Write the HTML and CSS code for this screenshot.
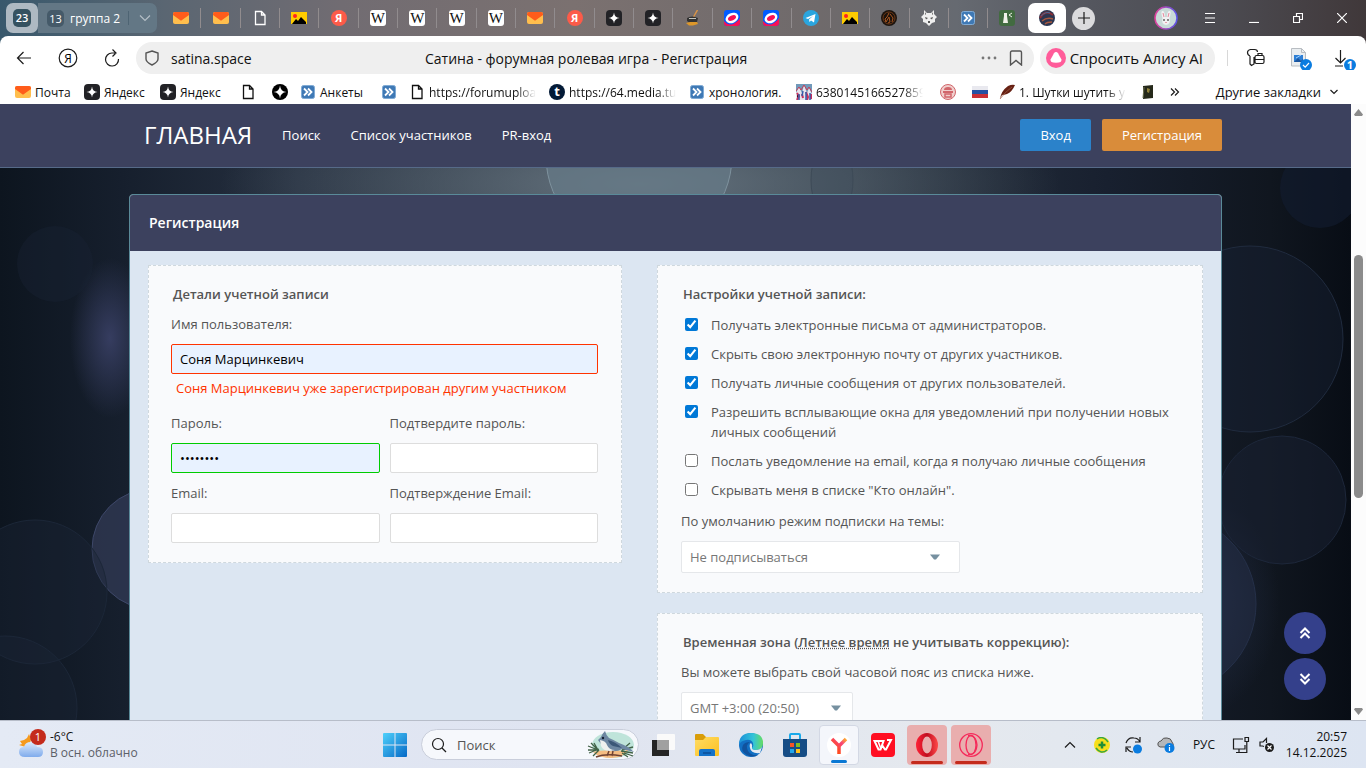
FILE: index.html
```html
<!DOCTYPE html>
<html lang="ru">
<head>
<meta charset="utf-8">
<title>Сатина - форумная ролевая игра - Регистрация</title>
<link rel="stylesheet" href="styles.css">
</head>
<body>
<svg class="sprite" aria-hidden="true">
  <defs>
    <linearGradient id="g-win" x1="0" y1="0" x2="1" y2="1"><stop offset="0" stop-color="#4fd0fb"/><stop offset="1" stop-color="#0669c6"/></linearGradient>
    <linearGradient id="g-edge" x1="0" y1="0" x2="1" y2="0"><stop offset="0" stop-color="#1b8fd8"/><stop offset=".6" stop-color="#33c4d8"/><stop offset="1" stop-color="#66dd62"/></linearGradient>
    <linearGradient id="g-y" x1="0" y1="1" x2="1" y2="0"><stop offset=".3" stop-color="#ff4b1f"/><stop offset=".7" stop-color="#f8437a"/><stop offset="1" stop-color="#ffae2a"/></linearGradient>
    <linearGradient id="g-op" x1="0" y1="0" x2="1" y2="0"><stop offset="0" stop-color="#ff2338"/><stop offset=".5" stop-color="#c00c1e"/><stop offset="1" stop-color="#ff4a4a"/></linearGradient>
    <linearGradient id="g-ring" x1="0" y1="0" x2="1" y2="0"><stop offset="0" stop-color="#e0409b"/><stop offset="1" stop-color="#5a55e8"/></linearGradient>
    <linearGradient id="g-cloud" x1="0" y1="0" x2="0" y2="1"><stop offset="0" stop-color="#dcebfc"/><stop offset="1" stop-color="#7fabec"/></linearGradient>
    <linearGradient id="g-fold" x1="0" y1="0" x2="1" y2="1"><stop offset="0" stop-color="#ffdc63"/><stop offset="1" stop-color="#fcc021"/></linearGradient>
  </defs>
  <symbol id="mail" viewBox="0 0 16 16"><rect y="2" width="16" height="12" rx="2" fill="#ffbe4d"/><path d="M0 4q0-2 2-2h12q2 0 2 2v1L9 10q-1 1-2 0L0 5z" fill="#ff5c1b"/></symbol>
  <symbol id="file" viewBox="0 0 16 16"><path d="M3.500 1.500h6l3.500 3.500v9.500h-9.500zM9.500 1.500v3.500h3.500" fill="none" stroke="currentColor" stroke-width="1.300"/></symbol>
  <symbol id="photo" viewBox="0 0 16 16"><rect y="2" width="16" height="12" fill="#ffcc00"/><path d="M1 14l4-5 2 2 3-4 5 5v2z" fill="#000"/><circle cx="4" cy="6" r="2" fill="#f22"/></symbol>
  <symbol id="spark" viewBox="0 0 16 16"><rect width="16" height="16" rx="4" fill="#222226"/><path d="M8 2.500q.5 5 5.500 5.500-5 .5-5.500 5.500-.5-5-5.500-5.500 5-.5 5.500-5.500" fill="#fff"/></symbol>
  <symbol id="sparkr" viewBox="0 0 16 16"><circle cx="8" cy="8" r="8" fill="#000"/><path d="M8 1.500q.5 6 6.500 6.500-6 .5-6.500 6.500-.5-6-6.500-6.500 6-.5 6.500-6.500" fill="#fff"/></symbol>
  <symbol id="lamp" viewBox="0 0 16 16"><path d="M12.500 0L8.500 7" stroke="#d99446" stroke-width="1.500"/><path d="M2 8q5-3 11 0l-1 4-2 1H5l-3-2z" fill="#333"/><path d="M4 8h7v1H4z" fill="#c3c3bd"/><path d="M1 13l4-1h7l1 2-5 1.500H4z" fill="#dd972a"/></symbol>
  <symbol id="swirl" viewBox="0 0 16 16"><rect width="16" height="16" rx="3" fill="#005bff"/><path d="M0 11Q5 17 11 13t5-7v7q0 3-3 3H3q-3 0-3-3z" fill="#f81155"/><ellipse cx="8" cy="8" rx="5.500" ry="3.700" transform="rotate(-25 8 8)" fill="#f81155" stroke="#fff" stroke-width="2.500"/></symbol>
  <symbol id="tg" viewBox="0 0 16 16"><circle cx="8" cy="8" r="8" fill="#2aa5de"/><path d="M2.500 8L12.500 4 11 12.500 8 10.500 6.500 12 6 9.500l4-3.500-5 3z" fill="#fff"/></symbol>
  <symbol id="fire" viewBox="0 0 16 16"><circle cx="8" cy="8" r="8" fill="#1b130d"/><circle cx="8" cy="8" r="6" fill="none" stroke="#6b3716"/><path d="M8 3l-2 4-2 2 1 3 3-5 1 5-2 1m2-9l3 4-1 4" fill="none" stroke="#a85520"/></symbol>
  <symbol id="wolf" viewBox="0 0 16 16"><path d="M3 0l3 3h4l3-3v4l3 3-2 2v3l-3 1-3 3-3-3-3-1V9L0 7l3-3z" fill="#eee"/><path d="M4 7l3 1-2 1.500zm8 0L9 8l2 1.500zM7 11h2v2H7zM4 2l1 2-1 1zm8 0l-1 2 1 1z" fill="#555"/></symbol>
  <symbol id="ff" viewBox="0 0 16 16"><rect x="1.500" y="1.500" width="13" height="13" rx="2" fill="#3f79b5" stroke="#80abd5"/><path d="M4 4.500L7.500 8 4 11.500m4-7L11.500 8 8 11.500" fill="none" stroke="#fff" stroke-width="1.800"/></symbol>
  <symbol id="tower" viewBox="0 0 16 16"><rect width="16" height="16" rx="3" fill="#426b40"/><path d="M5 3h3v3l1 7H4l1-7z" fill="#f1f1e9"/><path d="M13 3l-3 2 3 2" fill="none" stroke="#f1f1e9"/></symbol>
  <symbol id="planet" viewBox="0 0 16 16"><circle cx="8" cy="8" r="8" fill="#2c3550"/><path d="M1 8Q6-1 14 5" stroke="#8c2f36" stroke-width="2" fill="none"/><path d="M3 11q5-4 11-2M6 14q2-2 7-2" stroke="#a8583e" stroke-width="1.500" fill="none"/><path d="M2 6q5-5 9-3" stroke="#466a96" fill="none"/></symbol>
  <symbol id="collage" viewBox="0 0 16 16"><rect width="16" height="16" fill="#7199ba"/><path d="M0 16V9l3-6 3 6 2-8 3 8 2-5 3 6v6z" fill="#e9e4ec"/><path d="M1 9l2 3-2 4m5-6l1 4m3-6l2 5-1 3m4-6v5" stroke="#c62f5f" stroke-width="2"/><path d="M3 10v6m4-9l-1 5m4-4v8m4-7v7" stroke="#365daa" stroke-width="1.500"/><path d="M0 7l3-4 2 3 3-5 3 5 2-3 3 5" fill="none" stroke="#c4405a"/></symbol>
  <symbol id="seal" viewBox="0 0 16 16"><circle cx="8" cy="8" r="7.500" fill="#f0cfcd" stroke="#d1666b"/><path d="M4 6q0-3 4-3t4 3zM3 7h10v2H3z" fill="#d1666b"/><path d="M5 10h6v3H5z" fill="none" stroke="#d1666b" stroke-width="1.500"/></symbol>
  <symbol id="flag" viewBox="0 0 16 16"><rect y="2" width="16" height="12" fill="#e9e9ef"/><rect y="6" width="16" height="4" fill="#2451a4"/><rect y="10" width="16" height="4" fill="#c82f37"/></symbol>
  <symbol id="feather" viewBox="0 0 16 16"><path d="M1 15Q2 7 9 2q4-2 7-1-3 7-8 9-3 1-5 1z" fill="#672114"/><path d="M1 15Q6 8 13 3" stroke="#a46048" fill="none" stroke-width=".7"/></symbol>
  <symbol id="book" viewBox="0 0 16 16"><path d="M3 2l10-1v13l-10 1z" fill="#25291a"/><path d="M7 4l3 1-1 4-2-1z" fill="#8f813b"/><path d="M4 3l-1 11" stroke="#707455"/></symbol>
</svg>

<header class="tabstrip">
  <button class="tabcount" aria-label="Группы вкладок"><span>23</span></button>
  <button class="tabgroup"><span class="groupnum">13</span><span>группа 2</span><i class="groupsep"></i><svg width="12" height="8" viewBox="0 0 12 8"><path d="M1 1.500l5 5 5-5" class="line pale"/></svg></button>
  <nav class="tabs" aria-label="Вкладки">
    <a href="#"><svg><use href="#mail"/></svg></a><a href="#"><svg><use href="#mail"/></svg></a><a href="#"><svg><use href="#file"/></svg></a><a href="#"><svg><use href="#photo"/></svg></a><a href="#"><span class="badge ya">Я</span></a><a href="#"><span class="badge wiki">W</span></a><a href="#"><span class="badge wiki">W</span></a><a href="#"><span class="badge wiki">W</span></a><a href="#"><span class="badge wiki">W</span></a><a href="#"><svg><use href="#mail"/></svg></a><a href="#"><span class="badge ya">Я</span></a><a href="#"><svg><use href="#spark"/></svg></a><a href="#"><svg><use href="#spark"/></svg></a><a href="#"><svg><use href="#lamp"/></svg></a><a href="#"><svg><use href="#swirl"/></svg></a><a href="#"><svg><use href="#swirl"/></svg></a><a href="#"><svg><use href="#tg"/></svg></a><a href="#"><svg><use href="#photo"/></svg></a><a href="#"><svg><use href="#fire"/></svg></a><a href="#"><svg><use href="#wolf"/></svg></a><a href="#"><svg><use href="#ff"/></svg></a><a href="#"><svg><use href="#tower"/></svg></a><a href="#" class="active"><svg><use href="#planet"/></svg></a>
  </nav>
  <div class="wincontrols">
    <button class="newtab" aria-label="Новая вкладка"><svg width="12" height="12" viewBox="0 0 12 12"><path d="M6 0v12M0 6h12" class="line"/></svg></button>
    <span class="spacer"></span>
    <button aria-label="Профиль"><svg width="24" height="24" viewBox="0 0 24 24"><circle cx="12" cy="12" r="11" fill="#c8dad8" stroke="url(#g-ring)" stroke-width="1.500"/><path d="M8.500 12Q6 4 9 5q2 1 2 6h2q0-5 2-6 3-1 .5 7 1.500 6-3.500 7-5-1-3.500-7" fill="#f2f1f3"/><path d="M9 7l1 4m5-4l-1 4" stroke="#e7889b"/><circle cx="10" cy="14" r=".8"/><circle cx="14" cy="14" r=".8"/><path d="M11 16h2l-1 1z" fill="#d3506a"/></svg></button>
    <button aria-label="Меню"><svg width="10" height="10" viewBox="0 0 10 10"><path d="M0 .5h10M0 5h10M0 9.500h10" class="line white"/></svg></button>
    <button aria-label="Свернуть"><svg width="10" height="10" viewBox="0 0 10 10"><path d="M0 9.500h10" class="line white"/></svg></button>
    <button aria-label="Развернуть"><svg width="10" height="10" viewBox="0 0 10 10"><path d="M.5 3.500h6v6h-6zM3.500 3V.5h6v6H7" class="line white"/></svg></button>
    <button aria-label="Закрыть"><svg width="10" height="10" viewBox="0 0 10 10"><path d="M0 0l10 10M10 0L0 10" class="line white"/></svg></button>
  </div>
</header>

<div class="chrome">
  <div class="toolbar">
    <button class="tool" aria-label="Назад"><svg width="16" height="14" viewBox="0 0 16 14"><path d="M15 7H1.500M7.500 1l-6 6 6 6" class="line"/></svg></button>
    <button class="tool" aria-label="Яндекс"><svg width="20" height="20" viewBox="0 0 20 20"><circle cx="10" cy="10" r="8.800" class="line"/><text x="10" y="14.500" text-anchor="middle" font-size="12">Я</text></svg></button>
    <button class="tool" aria-label="Обновить"><svg width="16" height="18" viewBox="0 0 16 18"><path d="M14.500 10A6.500 6.500 0 1 1 8 4h3M8.500.5L12 4 8.500 7.500" class="line" stroke-width="1.500"/></svg></button>
    <div class="address">
      <svg width="14" height="16" viewBox="0 0 14 16"><path d="M7 1l6 2v6q0 3-6 6-6-3-6-6V3z" class="line grey"/></svg>
      <span class="host">satina.space</span>
      <span class="doctitle">Сатина - форумная ролевая игра - Регистрация</span>
      <svg width="16" height="4" viewBox="0 0 16 4" fill="#777"><circle cx="2" cy="2" r="1.400"/><circle cx="8" cy="2" r="1.400"/><circle cx="14" cy="2" r="1.400"/></svg>
      <svg width="14" height="16" viewBox="0 0 14 16"><path d="M1.500 2.500q0-1.500 1.500-1.500h8q1.500 0 1.500 1.500V15L7 10.500 1.500 15z" class="line grey"/></svg>
    </div>
    <button class="alice"><svg width="20" height="20" viewBox="0 0 20 20"><circle cx="10" cy="10" r="10" fill="#ff5c9a"/><path d="M10 4q1.200 0 2 1.300l3.300 5.900q1.200 3.600-5.300 3.600t-5.300-3.600L8 5.300Q8.800 4 10 4z" fill="#fff"/></svg>Спросить Алису AI</button>
    <i class="vsep"></i>
    <button class="ext" aria-label="Пароли"><svg width="20" height="20" viewBox="0 0 20 20"><path d="M4 8Q1.500 7 1.500 4.500T4.500 1.500h4q3 0 3 2.500M4 8v8l1.500 1.500L8 16V9M10.500 7.500h6q1.500 0 1.500 1.500v5q0 1.500-1.500 1.500h-6Q9 15.500 9 14V9q0-1.500 1.500-1.500zM9 11.500h9M12 7V5.500h4V7" class="line" stroke-width="1.400"/></svg></button>
    <button class="ext" aria-label="Переводчик"><svg width="24" height="24" viewBox="0 0 24 24"><path d="M3.500 2.500h10l4 4V20h-14z" fill="#e9edf0" stroke="#b8bdc2"/><path d="M13.500 2.500v4h4" fill="none" stroke="#b8bdc2"/><rect x="6" y="9" width="9" height="7" fill="#2d7ed4"/><path d="M6 16l4-4 3 3 2-2v3z" fill="#1b559e"/><path d="M8 12l5-3" stroke="#9fd0ff"/><circle cx="18" cy="19" r="6" fill="#0a7ce0"/><path d="M15 19l2.200 2.200L21 17" class="line white" stroke-width="1.500"/></svg></button>
    <button class="ext" aria-label="Загрузки"><svg width="24" height="24" viewBox="0 0 24 24"><path d="M8.500 4v13M3.500 12l5 5 5-5M3 20h8" class="line"/><circle cx="18" cy="19" r="6" fill="#0a7ce0"/><text x="18" y="23" font-size="11" font-weight="700" text-anchor="middle" fill="#fff">1</text></svg></button>
  </div>
  <nav class="bookmarks" aria-label="Закладки">
    <a href="#"><svg><use href="#mail"/></svg><span>Почта</span></a>
    <a href="#"><svg><use href="#spark"/></svg><span>Яндекс</span></a>
    <a href="#"><svg><use href="#spark"/></svg><span>Яндекс</span></a>
    <a href="#"><svg><use href="#file"/></svg></a>
    <a href="#"><svg><use href="#sparkr"/></svg></a>
    <a href="#"><svg><use href="#ff"/></svg><span>Анкеты</span></a>
    <a href="#"><svg><use href="#ff"/></svg></a>
    <a href="#"><svg><use href="#file"/></svg><span class="fade">https://forumupload</span></a>
    <a href="#"><span class="badge tumblr">t</span><span class="fade">https://64.media.tumblr</span></a>
    <a href="#"><svg><use href="#ff"/></svg><span>хронология.</span></a>
    <a href="#"><svg><use href="#collage"/></svg><span class="fade">6380145166527859</span></a>
    <a href="#"><svg><use href="#seal"/></svg></a>
    <a href="#"><svg><use href="#flag"/></svg></a>
    <a href="#"><svg><use href="#feather"/></svg><span class="fade">1. Шутки шутить умеют</span></a>
    <a href="#"><svg><use href="#book"/></svg></a>
    <button class="more" aria-label="Ещё закладки"><svg class="small" viewBox="0 0 10 10"><path d="M1 1.500L4.500 5 1 8.500m4-7L8.500 5 5 8.500" class="line"/></svg></button>
    <button class="other">Другие закладки <svg class="small" viewBox="0 0 10 10"><path d="M1.500 3L5 6.500 8.500 3" class="line"/></svg></button>
  </nav>
</div>

<div class="viewport">
  <div class="page">
    <svg class="bokeh" viewBox="0 0 1351 616" preserveAspectRatio="none" aria-hidden="true">
      <circle cx="639" cy="52" r="93" fill="#657987" fill-opacity=".75" stroke="#7e929e"/>
      <ellipse cx="832" cy="76" rx="21" ry="40" fill="#41505d" fill-opacity=".5" stroke="#3d4a57"/>
      <circle cx="152" cy="445" r="60" fill="#39415f" fill-opacity=".6" stroke="#3d4768"/>
      <circle cx="1250" cy="235" r="93" fill="#1a2436" fill-opacity=".4" stroke="#202b3e"/>
      <circle cx="1282" cy="396" r="64" fill="#192233" fill-opacity=".5" stroke="#1d273a"/>
      <circle cx="1166" cy="500" r="90" fill="#253049" fill-opacity=".5" stroke="#253049"/>
      <circle cx="35" cy="488" r="72" fill="#1b2536" fill-opacity=".4" stroke="#1c2738"/>
      <circle cx="5" cy="604" r="72" fill="#1b2536" fill-opacity=".4" stroke="#1c2738"/>
      <circle cx="55" cy="160" r="38" fill="#1a2434" fill-opacity=".4"/>
      <circle cx="1320" cy="84" r="40" fill="#131d31" fill-opacity=".6"/>
    </svg>
    <header class="navbar">
      <a class="brand" href="#">ГЛАВНАЯ</a>
      <nav><a href="#">Поиск</a><a href="#">Список участников</a><a href="#">PR-вход</a></nav>
      <a class="btn blue" href="#">Вход</a>
      <a class="btn orange" href="#">Регистрация</a>
    </header>
    <main class="panel">
      <h1>Регистрация</h1>
      <form class="columns">
        <fieldset>
          <h2>Детали учетной записи</h2>
          <div class="fields">
            <div class="field wide">
              <label for="user">Имя пользователя:</label>
              <input id="user" type="text" class="filled bad" value="Соня Марцинкевич">
              <p class="error">Соня Марцинкевич уже зарегистрирован другим участником</p>
            </div>
            <div class="field"><label for="pass">Пароль:</label><input id="pass" type="password" class="filled good" value="password"></div>
            <div class="field"><label for="pass2">Подтвердите пароль:</label><input id="pass2" type="password"></div>
            <div class="field"><label for="mail1">Email:</label><input id="mail1" type="email"></div>
            <div class="field"><label for="mail2">Подтверждение Email:</label><input id="mail2" type="email"></div>
          </div>
        </fieldset>
        <div class="stack">
          <fieldset>
            <h2>Настройки учетной записи:</h2>
            <div class="checks">
              <label><input type="checkbox" checked><span>Получать электронные письма от администраторов.</span></label>
              <label><input type="checkbox" checked><span>Скрыть свою электронную почту от других участников.</span></label>
              <label><input type="checkbox" checked><span>Получать личные сообщения от других пользователей.</span></label>
              <label><input type="checkbox" checked><span>Разрешить всплывающие окна для уведомлений при получении новых личных сообщений</span></label>
              <label><input type="checkbox"><span>Послать уведомление на email, когда я получаю личные сообщения</span></label>
              <label><input type="checkbox"><span>Скрывать меня в списке "Кто онлайн".</span></label>
            </div>
            <label class="selectlabel" for="sub">По умолчанию режим подписки на темы:</label>
            <div class="select long"><select id="sub"><option>Не подписываться</option></select><svg width="10" height="6" viewBox="0 0 10 6"><path d="M0 .5h10L6 5.500H4z" fill="#7690a0"/></svg></div>
          </fieldset>
          <fieldset>
            <h2>Временная зона (<abbr>Летнее время</abbr> не учитывать коррекцию):</h2>
            <label class="selectlabel" for="tz">Вы можете выбрать свой часовой пояс из списка ниже.</label>
            <div class="select short"><select id="tz"><option>GMT +3:00 (20:50)</option></select><svg width="10" height="6" viewBox="0 0 10 6"><path d="M0 .5h10L6 5.500H4z" fill="#7690a0"/></svg></div>
          </fieldset>
        </div>
      </form>
    </main>
    <div class="jump">
      <button aria-label="Наверх"><svg width="12" height="12" viewBox="0 0 12 12"><path d="M1.500 6L6 1.500 10.500 6m-9 5L6 6.500l4.500 4.500" class="line white bold"/></svg></button>
      <button aria-label="Вниз"><svg width="12" height="12" viewBox="0 0 12 12"><path d="M1.500 1L6 5.500 10.500 1m-9 5L6 10.500 10.500 6" class="line white bold"/></svg></button>
    </div>
  </div>
  <div class="scrollbar" aria-hidden="true">
    <svg width="9" height="7" viewBox="0 0 9 7"><path d="M4.500 0L9 5.500 8 7H1L0 5.500z" fill="#8b8b8b"/></svg>
    <div class="track"><div class="thumb"></div></div>
    <svg width="9" height="7" viewBox="0 0 9 7"><path d="M4.500 7L9 1.500 8 0H1L0 1.500z" fill="#8b8b8b"/></svg>
  </div>
</div>

<footer class="taskbar">
  <button class="weather">
    <svg width="28" height="32" viewBox="0 0 28 32"><path d="M11 5l2 5-2 9-10-3 3-1-2-3 4-1 3-2z" fill="#f59a1e"/><path d="M7 28Q1 28 1 23t5-5q1-5 7-5 5 0 6 5 6 0 6 5t-5 5z" fill="url(#g-cloud)"/><circle cx="20" cy="8" r="8" fill="#c42b1c"/><text x="20" y="12" text-anchor="middle" font-size="11" fill="#fff">1</text></svg>
    <span class="temps"><span>-6°C</span><span class="muted">В осн. облачно</span></span>
  </button>
  <div class="apps">
    <button aria-label="Пуск"><svg width="24" height="24" viewBox="0 0 24 24"><path d="M0 1q0-1 1-1h10.500v11.500H0zM12.500 0H23q1 0 1 1v10.500H12.500zM0 12.500h11.500V24H1q-1 0-1-1zM12.500 12.500H24V23q0 1-1 1H12.500z" fill="url(#g-win)"/></svg></button>
    <label class="search"><svg width="16" height="16" viewBox="0 0 16 16"><circle cx="7" cy="7" r="5.500" class="line" stroke-width="1.800"/><path d="M11 11l4 4" class="line" stroke-width="1.800"/></svg><input type="text" placeholder="Поиск" aria-label="Поиск">
      <svg width="52" height="28" viewBox="0 0 52 28"><ellipse cx="29" cy="14" rx="21" ry="13" fill="#bfe4da"/><path d="M9 21q10-3 32-1l5-4q-5 11-18 11-13 0-19-6z" fill="#f5bd83"/><path d="M4 15l10 4M5 22l10-4M7 12l7 7M9 25l6-6M38 19l11-3M37 20l12 2M39 18l7-6M38 22l6 4M10 12l4 7M4 19h10M40 22l9 3" stroke="#416247" stroke-width="1.300"/><path d="M14 9l3-3q1-3 4-6 1 4 4 7 5 2 10 5 9 3 15 9l-12-3q-5 3-11 2-8 0-10-7z" fill="#6d87a2"/><path d="M16 9q6 1 7 5 2 5 8 5-11 3-14-4z" fill="#eff1ef"/><path d="M24 9q8 2 14 8l-9-2q-4-2-5-6z" fill="#3b5878"/><circle cx="19" cy="7" r="1.200" fill="#162132"/><path d="M12 26q10-4 26-1M23 25l2-5m3 5l1-5" fill="none" stroke="#704232" stroke-width="1.500"/></svg></label>
    <button aria-label="Представление задач"><svg width="24" height="24" viewBox="0 0 24 24"><rect x="6" y="1" width="18" height="16" rx="1" fill="#fafafa"/><path d="M1 7h17v16H1z" fill="#252525"/><rect x="6" y="7" width="12" height="10" fill="#a0a0a0"/></svg></button>
    <button aria-label="Проводник"><svg width="26" height="24" viewBox="0 0 26 24"><path d="M1 2q0-1 1-1h7l3 3h12v7H1z" fill="#d99d09"/><path d="M1 7h8l3-3h12q1 0 1 1v17q0 1-1 1H2q-1 0-1-1z" fill="url(#g-fold)"/><path d="M5 23v-5q0-2 2-2h12q2 0 2 2v5z" fill="#1472c9"/><path d="M9 20h8" stroke="#0b4e96" stroke-width="1.500"/></svg></button>
    <button aria-label="Edge"><svg width="26" height="26" viewBox="0 0 26 26"><circle cx="13" cy="13" r="12" fill="#1270c4"/><path d="M1 13Q1 1 13 1t12 10q0 7-7 7-4 0-4-2 2-2 1-5-2-4-7-3-6 1-7 5z" fill="url(#g-edge)"/><path d="M12 10q-5 3-2 9 3 5 10 4-5 3-11 0-7-4-4-10 2-3 7-3z" fill="#11539e"/><path d="M14 16q0 2 4 2 4 0 6-3l-2 6q-9 1-10-5-1-4 1-5 2 2 1 5z" fill="#e3eaf3"/></svg></button>
    <button aria-label="Магазин"><svg width="24" height="24" viewBox="0 0 24 24"><path d="M7 7V2q0-1 1-1h8q1 0 1 1v5" fill="none" stroke="#19a9ea" stroke-width="2"/><path d="M0 6h24v15q0 3-3 3H3q-3 0-3-3z" fill="#164d85"/><path d="M7 10h4v4H7z" fill="#f65427"/><path d="M13 10h4v4h-4z" fill="#81bc23"/><path d="M7 16h4v4H7z" fill="#20a7ed"/><path d="M13 16h4v4h-4z" fill="#ffc11c"/></svg></button>
    <button class="current" aria-label="Яндекс Браузер"><svg width="24" height="24" viewBox="0 0 24 24"><circle cx="12" cy="12" r="12" fill="#fff"/><path d="M5 6l7 7v8M19 6l-7 7" fill="none" stroke="url(#g-y)" stroke-width="3.500"/></svg></button>
    <button aria-label="WPS"><svg width="24" height="24" viewBox="0 0 24 24"><rect width="24" height="24" rx="4" fill="#ff0f22"/><path d="M3.500 8h9l-3 8.500h-2zM11 12l3 4.500h1L20 7h-4" fill="none" stroke="#fff" stroke-width="2"/><path d="M7 8l3 8" stroke="#fff" stroke-width="1.500"/></svg></button>
    <button class="alert" aria-label="Opera"><svg width="24" height="24" viewBox="0 0 24 24"><path fill-rule="evenodd" d="M12 0a11 12 0 1 0 0 24a11 12 0 1 0 0-24zM12 3.500a4.800 8.500 0 1 1 0 17a4.800 8.500 0 1 1 0-17z" fill="url(#g-op)"/></svg></button>
    <button class="alert" aria-label="Opera GX"><svg width="24" height="24" viewBox="0 0 24 24" fill="none" stroke="#f52a5a"><circle cx="12" cy="12" r="11.300" stroke-width="1.300"/><ellipse cx="12" cy="12" rx="5" ry="9.500" stroke-width="1.300"/><path d="M9 2.500q8-1 9 9.500-1 10.500-9 9.500" stroke-width="1.300"/></svg></button>
  </div>
  <div class="tray">
    <button aria-label="Скрытые значки"><svg width="12" height="8" viewBox="0 0 12 8"><path d="M1 6.500l5-5 5 5" class="line" stroke-width="1.500"/></svg></button>
    <button aria-label="Антивирус"><svg width="16" height="16" viewBox="0 0 16 16"><circle cx="8" cy="8" r="8" fill="#f8df1c"/><path d="M3 2q6-4 11 3M2 11q5 7 11 2" fill="none" stroke="#35a642" stroke-width="1.500"/><path d="M8 4.500v7M4.500 8h7" stroke="#218e36" stroke-width="2.500"/></svg></button>
    <button aria-label="Обновление"><svg width="18" height="18" viewBox="0 0 18 18"><path d="M1 7Q3 1 9 2q4 0 6 4m0-5v5h-5M1 16v-5h5M2 12q2 4 6 4" class="line"/><circle cx="12.500" cy="13" r="4.500" fill="#0a7ce0"/></svg></button>
    <button aria-label="OneDrive"><svg width="18" height="16" viewBox="0 0 18 16"><path d="M3 10Q0 9 1 6q1-2 3-2 2-4 6-3 4 0 5 4 2 2 1 5z" fill="#b5b7ba" stroke="#555"/><circle cx="12.500" cy="11" r="5" fill="#0a7ce0"/><path d="M12.500 10v4m0-6v1" class="line white" stroke-width="1.500"/></svg></button>
    <button class="lang">РУС</button>
    <button class="net" aria-label="Сеть"><svg width="18" height="18" viewBox="0 0 18 18"><path d="M11 3H1.500v10H13V9M7 13v3m-3 .5h8M13 1.500h3.500v4H13zM14.800 6v10.500H12" class="line"/></svg></button>
    <button class="vol" aria-label="Звук"><svg width="16" height="16" viewBox="0 0 16 16"><path d="M5 9.500L3.500 9H1V5h3l3.500-3.500V6" class="line"/><circle cx="10.500" cy="10.500" r="4.500" fill="#1c1c1c"/><path d="M8.500 8.500l4 4m0-4l-4 4" class="line white"/></svg></button>
    <button class="clock"><span>20:57</span><span>14.12.2025</span></button>
  </div>
</footer>
</body>
</html>
```
FILE: styles.css
```css
* { box-sizing: border-box; }
body {
  margin: 0;
  height: 100vh;
  display: flex;
  flex-direction: column;
  overflow: hidden;
  font-family: "Open Sans", "Noto Sans", sans-serif;
  font-size: 13px;
  color: #111;
  background: #fff;
}
button { border: 0; padding: 0; margin: 0; background: none; font: inherit; color: inherit; display: flex; align-items: center; justify-content: center; }
a { color: inherit; text-decoration: none; }
svg { display: block; flex: none; }
.sprite { width: 0; height: 0; position: absolute; }
.line { fill: none; stroke: #1c1c1c; stroke-width: 1.2; }
.white { stroke: #fff; }
.bold { stroke-width: 2; }
.grey { stroke: #555; stroke-width: 1.4; }
.pale { stroke: #b4bec6; }

/* Letter icons */
.badge { flex: none; width: 16px; height: 16px; line-height: 16px; text-align: center; }
.ya { border-radius: 50%; background: #fc5b49; color: #fff; font-size: 11px; font-weight: 700; }
.wiki { border-radius: 3px; background: #fff; color: #111; font-family: "Liberation Serif", serif; font-size: 15px; }
.tumblr { border-radius: 50%; background: #031a36; color: #fff; font-size: 13px; font-weight: 700; line-height: 14px; }

/* Tab strip */
.tabstrip {
  display: flex;
  align-items: center;
  height: 44px;
  margin-bottom: -8px;
  padding: 0 0 8px 6px;
  background: linear-gradient(90deg, #38586c 0, #5a6672 12%, #716c72 25%, #7b7170 42%, #6f6a6b 60%, #666a71 70%, #54565e 80%, #4b4a50 90%, #40383a 100%);
  color: #fff;
}
.tabcount { width: 32px; height: 30px; border-radius: 7px; background: #aeb9c2; }
.tabcount span { width: 18px; height: 18px; border-radius: 5px; background: #355260; font-size: 11px; font-weight: 600; line-height: 18px; }
.tabgroup { height: 30px; width: 119px; padding-left: 9px; justify-content: flex-start; gap: 6px; font-size: 12px; font-weight: 500; border-radius: 0 7px 7px 0; background: #637785; white-space: nowrap; }
.groupnum { width: 17px; height: 17px; line-height: 17px; border-radius: 5px; background: #455a69; font-size: 11px; }
.groupsep { width: 1px; height: 14px; margin: 0 4px 0 2px; background: #4e6473; }
.tabs { flex: 1; display: flex; align-items: center; padding-left: 5px; }
.tabs a { flex: 1; height: 20px; display: flex; align-items: center; justify-content: center; border-right: 1px solid #918c8e; }
.tabs a:nth-child(22) { border-color: transparent; }
.tabs svg { width: 16px; height: 16px; }
.tabs .active { height: 30px; border: 0; border-radius: 7px; background: #fff; }
.wincontrols { display: flex; align-items: center; width: 300px; height: 30px; padding-right: 2px; }
.wincontrols button { width: 44px; height: 30px; }
.wincontrols .newtab { width: 23px; height: 23px; margin-left: 6px; border-radius: 50%; background: #dbdbdd; }
.spacer { flex: 1; }

/* Toolbar */
.chrome { background: #fff; border-radius: 8px 8px 0 0; }
.toolbar { display: flex; align-items: center; height: 44px; padding: 0 0 0 2px; }
.tool { width: 44px; height: 32px; }
.address { flex: 1; display: flex; align-items: center; height: 32px; margin-left: 2px; padding: 0 11px 0 9px; gap: 12px; border-radius: 16px; background: #efefef; font-size: 14px; }
.doctitle { flex: 1; padding-right: 60px; text-align: center; white-space: nowrap; }
.alice { height: 32px; margin-left: 6px; padding: 0 12px 0 6px; gap: 4px; border-radius: 16px; background: #efefef; font-size: 15px; white-space: nowrap; }
.vsep { width: 1px; height: 16px; margin-left: 12px; background: #d8d8d8; }
.ext { width: 44px; height: 32px; }
.vsep + .ext { margin-left: 6px; }

/* Bookmarks */
.bookmarks {
  display: grid;
  grid-template-columns: 69px 76px 80px 32px 28px 81px 28px 140px 140px 107px 144px 32px 27px 141px 30px 32px 1fr;
  align-items: center;
  height: 24px;
  padding: 0 27px 0 15px;
  font-size: 12px;
  white-space: nowrap;
}
.bookmarks a { display: flex; align-items: center; gap: 4px; }
.bookmarks svg { width: 16px; height: 16px; }
.bookmarks .small { width: 10px; height: 10px; }
.bookmarks .more { justify-content: flex-start; }
.fade { max-width: 107px; overflow: hidden; -webkit-mask-image: linear-gradient(90deg, #000 82%, transparent); mask-image: linear-gradient(90deg, #000 82%, transparent); }
.bookmarks .other { justify-content: flex-end; gap: 8px; font-size: 13px; }

/* Site */
.viewport { flex: 1; min-height: 0; display: flex; }
.page {
  flex: 1;
  position: relative;
  overflow: hidden;
  font-size: 13px;
  line-height: 20px;
  color: #555;
  background:
    radial-gradient(ellipse 40px 80px at 110px 234px, #363d60 0, transparent 100%),
    radial-gradient(ellipse 420px 100px at 640px 80px, #66747f 0, transparent 100%),
    radial-gradient(ellipse 100px 120px at 1180px 500px, #232d45 0, transparent 100%),
    linear-gradient(90deg, #0d151f 0, #161f2d 9%, #263040 22%, #2b3642 60%, #18202f 82%, #10161f 94%, #080d15 100%);
}
.bokeh { position: absolute; inset: 0; width: 100%; height: 100%; }
.navbar {
  position: relative;
  display: flex;
  align-items: center;
  height: 64px;
  padding: 0 129px 1px 144px;
  border-bottom: 1px solid #566a88;
  background: #3c415e;
  color: #fff;
  font-weight: 500;
}
.brand { font-size: 24px; font-weight: 400; }
.navbar nav { flex: 1; display: flex; gap: 30px; margin-left: 30px; }
.btn { height: 32px; padding: 0 20px; line-height: 32px; border-radius: 2px; }
.blue { background: #2b82ca; }
.orange { margin-left: 11px; background: #d98c3a; }
.panel { position: relative; margin: 26px 129px 0; border: 1px solid #5a8a99; border-radius: 4px; background: #dce6f2; }
.panel h1 { margin: 0; padding: 18px 19px; font-size: 14px; font-weight: 600; line-height: 20px; color: #fff; background: #3c415e; border-radius: 3px 3px 0 0; }
.columns { display: grid; grid-template-columns: 474fr 546fr; gap: 35px; align-items: start; padding: 14px 18px 40px; }
fieldset { min-width: 0; margin: 0; padding: 18px 23px 19px; border: 1px dashed #cfd8de; background: #f9fafc; }
.columns > fieldset { padding: 18px 23px 19px 22px; }
h2 { margin: 0 0 10px 2px; font-size: 13px; font-weight: 600; line-height: 20px; }
abbr { text-decoration: underline dotted; }
.stack { display: grid; gap: 20px; }
.fields { display: grid; grid-template-columns: 1fr 1fr; gap: 10px; }
.field { display: grid; gap: 10px; }
.wide { grid-column: 1 / 3; padding-bottom: 5px; }
.field input { width: 100%; height: 30px; padding: 0 8px; border: 1px solid #ddd; border-radius: 2px; background: #fff; font: inherit; color: #000; outline: 0; }
.field .filled { background: #e8f2ff; }
.field .bad { border-color: #ff3300; }
.field .good { border-color: #0c0; }
.error { margin: -6px 0 0 5px; color: #ff3300; }
.checks { display: grid; gap: 9px; padding: 1px 0; }
.checks label { display: flex; align-items: flex-start; gap: 13px; }
.checks input { width: 13px; height: 13px; margin: 3px 0 0 4px; accent-color: #0078d7; flex: none; }
.selectlabel { display: block; margin-top: 10px; }
.select { position: relative; height: 32px; margin-top: 10px; }
.long { width: 279px; }
.short { width: 172px; }
.select select { appearance: none; width: 100%; height: 32px; padding: 0 8px; border: 1px solid #e5e7ea; border-radius: 2px; background: #fff; font: inherit; color: #777; }
.select svg { position: absolute; top: 13px; right: 20px; }
.select.short svg { right: 12px; }
.jump { position: absolute; right: 25px; bottom: 20px; display: grid; gap: 4px; }
.jump button { width: 42px; height: 42px; border-radius: 50%; background: #34408b; }
.scrollbar { width: 15px; display: flex; flex-direction: column; align-items: center; justify-content: space-between; padding: 5px 0; background: #fcfcfc; }
.track { flex: 1; padding-top: 139px; }
.thumb { width: 9px; height: 243px; border-radius: 5px; background: #8b8b8b; }

/* Taskbar */
.taskbar {
  display: grid;
  grid-template-columns: 1fr auto 1fr;
  align-items: center;
  height: 48px;
  border-top: 1px solid #b7bdc9;
  background: linear-gradient(90deg, #e4eaf5 0, #dfe4f1 40%, #e5e9ee 70%, #dde5f2 100%);
  font-size: 12px;
  line-height: 16px;
}
.weather { justify-content: flex-start; padding-left: 18px; gap: 4px; }
.temps { display: grid; text-align: left; }
.muted { color: #5c6067; }
.apps { display: flex; align-items: center; }
.apps > button { position: relative; width: 44px; height: 40px; }
.search { display: flex; align-items: center; width: 218px; height: 31px; margin: 0 2px 0 4px; padding: 0 2px 0 9px; gap: 10px; border: 1px solid #c9cedb; border-radius: 16px; background: #f6f8fc; }
.search input { flex: 1; min-width: 0; padding: 0; border: 0; outline: 0; background: none; font: inherit; font-size: 13px; }
.search input::placeholder { color: #555; opacity: 1; }
.apps .current, .apps .alert { width: 40px; margin: 0 2px; border-radius: 4px; }
.apps .current { background: #f4f6fb; border: 1px solid #d3d8e4; }
.apps .alert { background: #e9aeae; }
.current::after, .alert::after { content: ""; position: absolute; bottom: 1px; left: 50%; width: 16px; height: 3px; margin-left: -8px; border-radius: 2px; background: #0a78d4; }
.alert::after { width: 32px; margin-left: -16px; background: #c42b1c; }
.tray { display: flex; align-items: center; justify-content: flex-end; padding-right: 19px; }
.tray button { width: 32px; height: 40px; }
.tray .lang { width: 44px; }
.tray .net { width: 30px; }
.tray .vol { width: 22px; }
.tray .clock { display: grid; align-content: center; justify-content: end; width: 69px; text-align: right; }
```
